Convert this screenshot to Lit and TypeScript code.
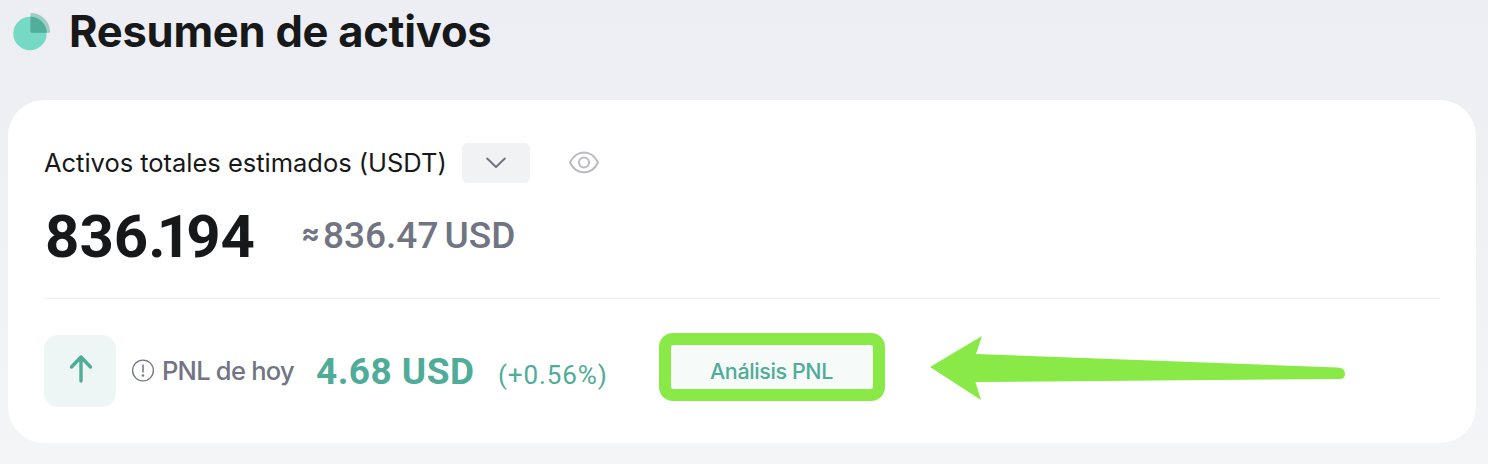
import { LitElement, html, css } from "lit";
import { customElement } from "lit/decorators.js";

@customElement("app-root")
export class AppRoot extends LitElement {
  static styles = css`
    :host {
      display: block;
      box-sizing: border-box;
      height: 464px;
      overflow: hidden;
      padding: 0 12px 0 8px;
      background: linear-gradient(180deg, #edeef3 0%, #eff0f4 35%, #f2f3f7 75%, #f4f5f7 100%);
      font-family: Inter, "Liberation Sans", sans-serif;
      color: #17181a;
    }
    svg { display: block; flex: none; }
    span { white-space: nowrap; }
    header { display: flex; height: 100px; padding-left: 4px; box-sizing: border-box; }
    .pie { margin-top: 11px; }
    h1 { margin: 1px 0 0 17px; font-size: 43.5px; line-height: 60px; font-weight: 700; white-space: nowrap; letter-spacing: -0.25px; }
    .card { box-sizing: border-box; height: 343px; padding: 43px 36px 0; background: #fff; border-radius: 36px; }
    .label-row { display: flex; align-items: center; height: 40px; }
    .label { width: 418px; padding-bottom: 2px; font-size: 25.5px; font-weight: 400; letter-spacing: -0.02px; }
    .select { display: flex; align-items: center; justify-content: center; width: 68px; height: 40px; border-radius: 6px; background: #f1f2f4; }
    .eye { margin-left: 38px; }
    .total-row { display: flex; height: 116px; box-sizing: border-box; border-bottom: 1px solid #f0f1f2; }
    .total { width: 257px; margin-top: 15px; padding-left: 1px; box-sizing: border-box; font: 700 60px/78px Roboto, sans-serif; }
    .dot { letter-spacing: -9px; }
    .one { letter-spacing: -5px; }
    .approx { width: 22px; margin-top: 27px; font: 700 28px/46px Inter, sans-serif; color: #717583; }
    .fiat { margin-top: 28px; font: 500 37px/50px Roboto, sans-serif; color: #717583; word-spacing: -3px; }
    .pnl-row { display: flex; align-items: center; height: 72px; margin-top: 36px; }
    .trend { display: flex; align-items: center; justify-content: center; width: 72px; height: 72px; border-radius: 14px; background: #edf6f5; }
    .trend svg { margin-bottom: 4px; }
    .info { margin-left: 15px; }
    .pnl-label { width: 154px; margin-left: 7px; padding-bottom: 2px; font-size: 25.5px; font-weight: 500; letter-spacing: -0.75px; color: #717583; }
    .pnl { width: 182px; padding-top: 2px; font: 700 37px/50px Roboto, sans-serif; letter-spacing: 0.45px; color: #4fac98; }
    .pct { width: 161px; margin-top: 8px; font: 400 26px/36px Roboto, sans-serif; letter-spacing: 0.9px; color: #4fac98; }
    .analysis { display: flex; align-items: center; justify-content: center; box-sizing: border-box; flex: none; width: 226px; height: 68px; margin-top: -8px; border: 12px solid #89ea47; border-radius: 14px; background: #f6faf9; color: #4fac98; font-size: 21.5px; font-weight: 500; letter-spacing: -0.4px; }
    .analysis-text { padding: 8px 1px 0 0; }
    .pointer { margin: -7px 0 0 44px; }
  `;

  render() {
    return html`
      <header>
        <svg class="pie" width="40" height="42" viewBox="0 0 40 42">
          <circle cx="18" cy="22.5" r="16.7" fill="#76d9c6" />
          <path d="M18.5 3.2q0-1.4 1.4-1.2C30 2.8 37 10 38.2 20q.2 1.8-1.2 1.8H20q-1.5 0-1.5-1.5Z" fill="#4fac98" fill-opacity=".5" />
          <path d="M18.5 5.8A16.7 16.7 0 0 1 34.7 21.8H20q-1.5 0-1.5-1.5Z" fill="#4fac98" fill-opacity=".9" />
        </svg>
        <h1>Resumen de activos</h1>
      </header>
      <section class="card">
        <div class="label-row">
          <span class="label">Activos totales estimados (USDT)</span>
          <div class="select">
            <svg width="20" height="12" viewBox="0 0 20 12" fill="none" stroke="#717583" stroke-width="2" stroke-linecap="round" stroke-linejoin="round"><path d="M1.2 1.5 10 10l8.8-8.5" /></svg>
          </div>
          <svg class="eye" width="32" height="24" viewBox="0 0 32 24" fill="none" stroke="#babac1" stroke-width="2"><path d="M2 11.500C5.200 5 10 1.500 16 1.500s10.800 3.500 14 10c-3.200 6.500-8 9.800-14 9.800S5.200 18 2 11.500Z" stroke-linejoin="round" /><circle cx="16" cy="11.500" r="5" /></svg>
        </div>
        <div class="total-row">
          <span class="total">836<span class="dot">.</span><span class="one">1</span>94</span>
          <span class="approx">≈</span>
          <span class="fiat">836.47 USD</span>
        </div>
        <div class="pnl-row">
          <div class="trend">
            <svg width="26" height="30" viewBox="0 0 26 30" fill="none" stroke="#4fac98" stroke-width="3.400" stroke-linecap="round" stroke-linejoin="round"><path d="M14 27V3M4.500 13 14 3l9.500 10" /></svg>
          </div>
          <svg class="info" width="24" height="24" viewBox="0 0 24 24" fill="none" stroke="#717583"><circle cx="12" cy="11.500" r="10.400" stroke-width="1.300" /><path d="M12 5.500v8" stroke-width="1.500" /><circle cx="12" cy="16.500" r="1.200" fill="#717583" stroke="none" /></svg>
          <span class="pnl-label">PNL de hoy</span>
          <span class="pnl">4.68 USD</span>
          <span class="pct">(+0.56%)</span>
          <div class="analysis"><span class="analysis-text">Análisis PNL</span></div>
          <svg class="pointer" width="417" height="66" viewBox="0 0 417 66"><path d="M1 32 53 1l-6 18L408 32.500q8 0 8 6 0 5.500-5 5.500L46.500 47 52 65Z" fill="#89ea47" /></svg>
        </div>
      </section>
    `;
  }
}
